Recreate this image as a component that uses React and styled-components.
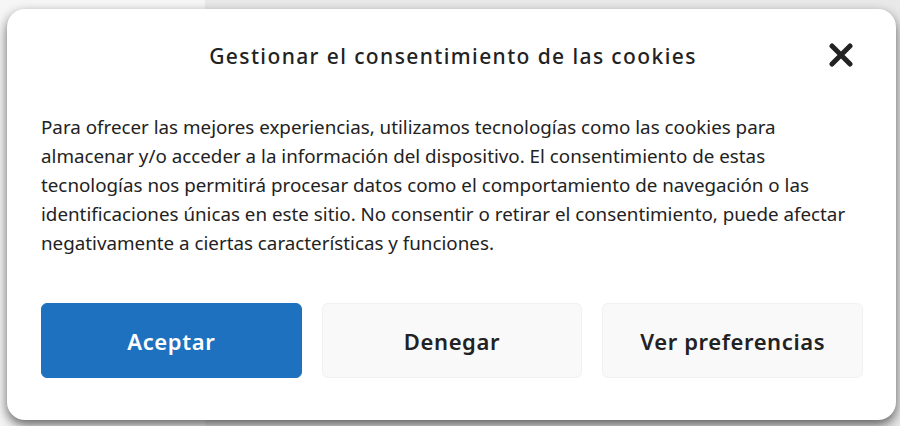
import React from 'react';
import styled, { createGlobalStyle } from 'styled-components';

const GlobalStyle = createGlobalStyle`
    html, body {
        margin: 0;
        padding: 0;
        height: 100%;
    }
    body {
        font-family: "Noto Sans", "Open Sans", sans-serif;
        overflow: hidden;
    }
    #root {
        height: 100%;
    }
`
const Page = styled.div`
    position: relative;
    width: 100vw;
    height: 100vh;
    display: grid;
    grid-template-columns: 205px 1fr;
    background: #e9e9e9;
`
const Sidebar = styled.div`
    background: #f6f6f6;
`
const Content = styled.div`
    background: #e9e9e9;
`
const Dialog = styled.div`
    position: absolute;
    left: 7px;
    top: 9px;
    width: 889px;
    height: 411px;
    box-sizing: border-box;
    background: #ffffff;
    border-radius: 18px;
    box-shadow: 0 5px 12px rgba(0, 0, 0, 0.6);
    padding: 0 20px 0 34px;
    display: flex;
    flex-direction: column;
`
const Header = styled.div`
    position: relative;
    height: 94px;
    display: flex;
    align-items: center;
    justify-content: center;
    margin-right: 13px;
`
const Title = styled.h2`
    margin: 0;
    margin-left: 2px;
    font-size: 21px;
    font-weight: 500;
    color: #222222;
    letter-spacing: 1.4px;
`
const CloseButton = styled.button`
    position: absolute;
    right: 8px;
    top: 32px;
    width: 28px;
    height: 28px;
    padding: 0;
    border: none;
    background: none;
    display: flex;
    align-items: center;
    justify-content: center;
    cursor: pointer;
`
const Message = styled.p`
    margin: 10px 0 0;
    font-size: 18.8px;
    line-height: 29px;
    color: #222222;
    white-space: nowrap;
`
const Actions = styled.div`
    margin-top: 45px;
    margin-right: 13px;
    display: grid;
    grid-template-columns: repeat(3, 1fr);
    gap: 20px;
`
const Button = styled.button`
    height: 75px;
    border-radius: 6px;
    font-family: inherit;
    font-size: 22px;
    font-weight: 600;
    letter-spacing: 0.6px;
    cursor: pointer;
    background: ${p => p.$primary ? '#1e71be' : '#f9f9f9'};
    color: ${p => p.$primary ? '#ffffff' : '#222222'};
    border: 1px solid ${p => p.$primary ? '#1e71be' : '#f1f1f1'};
`

export default function App() {
    return (
        <>
            <GlobalStyle />
            <Page>
                <Sidebar />
                <Content />
                <Dialog>
                    <Header>
                        <Title>Gestionar el consentimiento de las cookies</Title>
                        <CloseButton aria-label="Cerrar">
                            <svg width="24" height="24" viewBox="0 0 24 24">
                                <path d="M3 3 L21 21 M21 3 L3 21" stroke="#222" strokeWidth="5" strokeLinecap="round" fill="none" />
                            </svg>
                        </CloseButton>
                    </Header>
                    <Message>
                        Para ofrecer las mejores experiencias, utilizamos tecnologías como las cookies para<br />
                        almacenar y/o acceder a la información del dispositivo. El consentimiento de estas<br />
                        tecnologías nos permitirá procesar datos como el comportamiento de navegación o las<br />
                        identificaciones únicas en este sitio. No consentir o retirar el consentimiento, puede afectar<br />
                        negativamente a ciertas características y funciones.
                    </Message>
                    <Actions>
                        <Button $primary>Aceptar</Button>
                        <Button>Denegar</Button>
                        <Button>Ver preferencias</Button>
                    </Actions>
                </Dialog>
            </Page>
        </>
    )
}
